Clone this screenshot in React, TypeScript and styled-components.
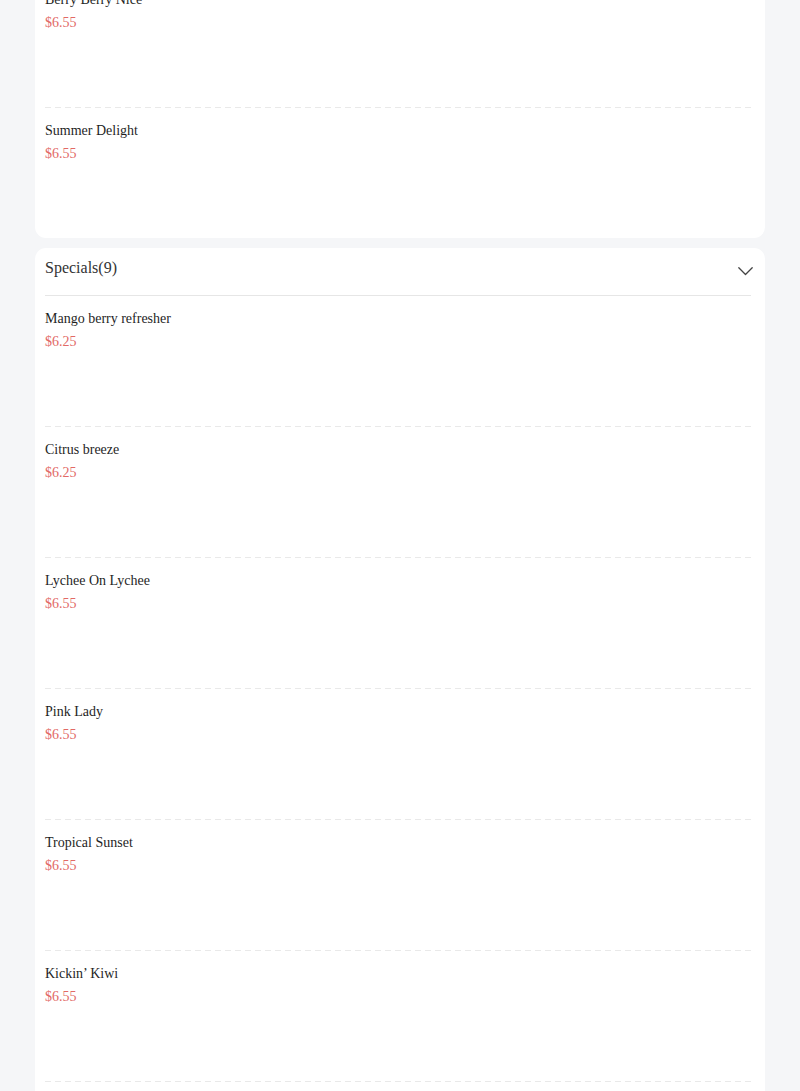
import styled, { createGlobalStyle } from 'styled-components'

const GlobalStyle = createGlobalStyle`
	html, body {
		margin: 0;
		padding: 0;
		background: #f5f6f8;
		font-family: "Liberation Serif", "Times New Roman", serif;
	}
`

const Page = styled.div`
	display: flex;
	flex-direction: column;
	gap: 10px;
	padding: 0 35px 20px;
	margin-top: -71px;
`
const Card = styled.section`
	background: #ffffff;
	border-radius: 11px;
	padding: 0 10px;
	overflow: hidden;
`
const Header = styled.div`
	display: flex;
	align-items: flex-start;
	justify-content: space-between;
	height: 48px;
	box-sizing: border-box;
	padding-top: 10px;
	margin-right: 4px;
	border-bottom: 1px solid #e6e6e6;
	cursor: pointer;
`
const Title = styled.span`
	font-size: 16px;
	line-height: 20px;
	color: #333333;
`
const ChevronIcon = styled.svg`
	margin-top: 9px;
	margin-right: -2px;
	overflow: visible;
`
const Item = styled.div`
	position: relative;
	height: 130px;
	box-sizing: border-box;
	padding-top: 13px;
	margin-bottom: 1px;

	&::after {
		content: '';
		position: absolute;
		left: 0;
		right: 0;
		bottom: -1px;
		height: 1px;
		background: repeating-linear-gradient(to right, #e9e9e9 0 6px, transparent 6px 10px);
	}
	&:last-child {
		margin-bottom: 0;
	}
	&:last-child::after {
		display: none;
	}
`
const Name = styled.div`
	font-size: 14px;
	line-height: 20px;
	color: #1f1f1f;
`
const Price = styled.div`
	margin-top: 3px;
	font-size: 14px;
	line-height: 20px;
	color: #e26966;
`

interface Drink {
	name: string
	price: string
}

interface Category {
	title: string
	items: Drink[]
}

const categories: Category[] = [
	{
		title: 'Fruit Tea(2)',
		items: [
			{ name: 'Berry Berry Nice', price: '$6.55' },
			{ name: 'Summer Delight', price: '$6.55' },
		],
	},
	{
		title: 'Specials(9)',
		items: [
			{ name: 'Mango berry refresher', price: '$6.25' },
			{ name: 'Citrus breeze', price: '$6.25' },
			{ name: 'Lychee On Lychee', price: '$6.55' },
			{ name: 'Pink Lady', price: '$6.55' },
			{ name: 'Tropical Sunset', price: '$6.55' },
			{ name: 'Kickin’ Kiwi', price: '$6.55' },
			{ name: 'Passion Fruit Green Tea', price: '$6.55' },
			{ name: 'Peach Oolong', price: '$6.55' },
			{ name: 'Watermelon Splash', price: '$6.55' },
		],
	},
]

function Chevron() {
	return (
		<ChevronIcon width="15" height="8" viewBox="0 0 15 8" fill="none">
			<path d="M0.8 0.8l6.7 6.7 6.7-6.7" stroke="#444" strokeWidth="1.3" strokeLinecap="round" strokeLinejoin="round" />
		</ChevronIcon>
	)
}

function App() {
	return (
		<>
			<GlobalStyle />
			<Page>
				{categories.map((cat) => (
					<Card key={cat.title}>
						<Header>
							<Title>{cat.title}</Title>
							<Chevron />
						</Header>
						{cat.items.map((item) => (
							<Item key={item.name}>
								<Name>{item.name}</Name>
								<Price>{item.price}</Price>
							</Item>
						))}
					</Card>
				))}
			</Page>
		</>
	)
}
export default App
